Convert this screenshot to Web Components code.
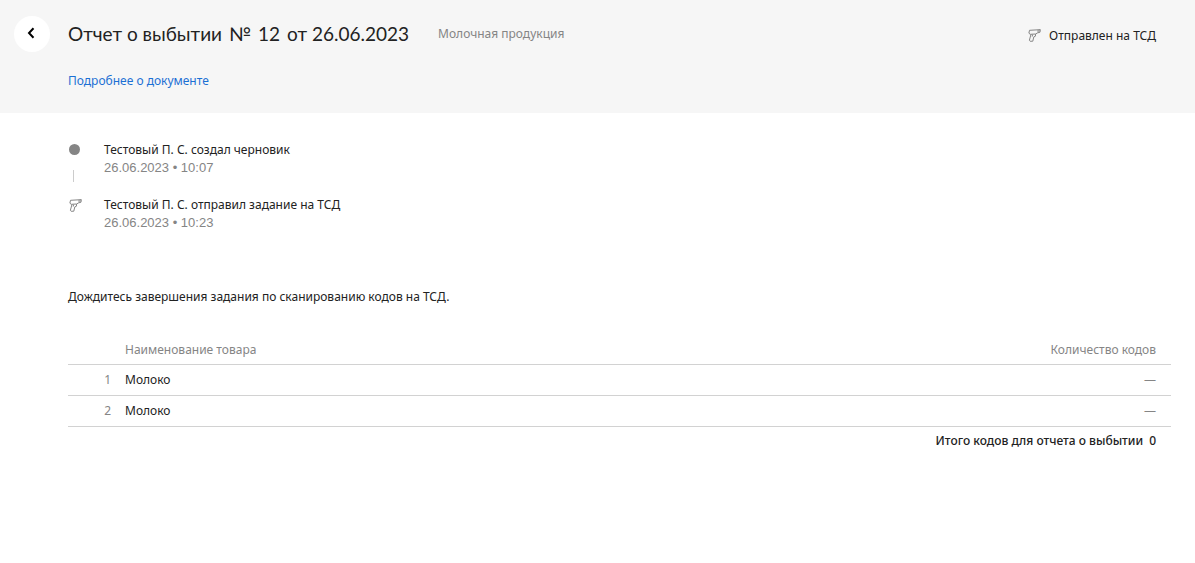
<!DOCTYPE html>
<html lang="ru">
<head>
<meta charset="utf-8">
<title>Отчет о выбытии № 12</title>
<style>
  body { margin: 0; background: #fff; color: #222; font: 12px/18px "Noto Sans", "Open Sans", sans-serif; }
</style>
</head>
<body>
<report-page></report-page>

<template id="scanner-icon">
  <style>
    :host { display: block; width: 13px; height: 13px; color: #858585; }
    svg { display: block; width: 100%; height: 100%; }
  </style>
  <svg viewBox="0 0 13 13" fill="none" stroke="currentColor" stroke-linejoin="round" aria-hidden="true">
    <path d="M1.5 1.3 10 .8 12.3.6 12 3.2 9.5 3.9 7.6 5 2.2 5.3.9 4.2Z"/>
    <path d="M9.4 1 12 .8 11.6 3 9.2 3.6Z" fill="currentColor" stroke="none" opacity=".6"/>
    <path d="M3 5.3 1.4 11.2 2.2 12.3 4.8 12.2 5.8 7.9 7.4 7.2 7.6 5M4.6 5.600 4.200 7.600"/>
  </svg>
</template>

<template id="back-button">
  <style>
    :host { display: block; }
    button { display: grid; place-items: center; width: 36px; height: 36px; padding: 0; border: 0; border-radius: 50%; background: #fff; color: #000; cursor: pointer; }
    svg { display: block; margin-right: 2px; margin-bottom: 2px; }
  </style>
  <button type="button" aria-label="Назад">
    <svg width="8" height="12" viewBox="0 0 8 12" fill="none" stroke="currentColor" stroke-width="2"><path d="M6.5 1.2 2 6l4.5 4.8"/></svg>
  </button>
</template>

<template id="report-header">
  <style>
    :host { display: grid; grid-template-columns: 36px 1fr; column-gap: 18px; padding: 16px 39px 23px 14px; background: #f6f6f6; }
    .line { display: flex; align-items: center; height: 36px; }
    h1 { margin: 0; font: 400 19px/24px Lato, Roboto, sans-serif; }
    .group { margin-left: 29px; color: #858585; }
    .status { display: flex; align-items: center; gap: 8px; margin-left: auto; padding-top: 3px; }
    a { grid-column: 2; justify-self: start; margin-top: 20px; color: #1c70d4; text-decoration: none; }
  </style>
  <back-button></back-button>
  <div class="line">
    <h1><slot name="title"></slot></h1>
    <span class="group"><slot name="group"></slot></span>
    <span class="status"><scanner-icon></scanner-icon><slot name="status"></slot></span>
  </div>
  <a href="#details">Подробнее о документе</a>
</template>

<template id="history-event">
  <style>
    :host { display: grid; grid-template-columns: 14px 1fr; column-gap: 22px; }
    .mark { display: grid; justify-items: start; align-content: start; padding: 3px 0 0 1px; }
    .when { color: #858585; font: 13px/18px "Liberation Sans", Arial, sans-serif; }
  </style>
  <div class="mark"><slot name="mark"></slot></div>
  <div>
    <div><slot></slot></div>
    <div class="when"><slot name="when"></slot></div>
  </div>
</template>

<template id="document-history">
  <style>
    :host { display: grid; row-gap: 14px; }
    .dot { width: 11px; height: 11px; border-radius: 50%; background: #858585; }
    .link { width: 1px; height: 12px; margin: 15px 0 0 4px; background: #ccc; }
  </style>
  <history-event>
    <span slot="mark" class="dot"></span><span slot="mark" class="link"></span>
    Тестовый П. С. создал черновик
    <span slot="when">26.06.2023 • 10:07</span>
  </history-event>
  <history-event>
    <scanner-icon slot="mark"></scanner-icon>
    Тестовый П. С. отправил задание на ТСД
    <span slot="when">26.06.2023 • 10:23</span>
  </history-event>
</template>

<template id="goods-table">
  <style>
    :host { display: block; }
    table { width: 100%; border-collapse: collapse; }
    th, td { height: 18px; padding: 6px 15px 6px 0; text-align: left; font-weight: 400; }
    thead th { padding-bottom: 5px; }
    thead th, tbody tr > * { border-bottom: 1px solid #d2d2d2; }
    thead th, .muted { color: #858585; }
    .num { width: 43px; padding-right: 14px; text-align: right; }
    .count { text-align: right; }
    tfoot td { padding-top: 5px; text-align: right; font-weight: 500; }
    output { margin-left: 6px; }
  </style>
  <table>
    <thead><tr><th class="num"></th><th>Наименование товара</th><th class="count">Количество кодов</th></tr></thead>
    <tbody></tbody>
    <tfoot><tr><td colspan="3">Итого кодов для отчета о выбытии<output>0</output></td></tr></tfoot>
  </table>
</template>

<template id="report-page">
  <style>
    :host { display: block; }
    main { padding: 28px 24px 28px 68px; }
    p { margin: 56px 0 29px; }
    .title { display: flex; gap: 7px; }
  </style>
  <report-header>
    <span slot="title" class="title"><span>Отчет о выбытии</span> <span>№</span> <span>12</span> <span>от 26.06.2023</span></span>
    <span slot="group">Молочная продукция</span>
    <span slot="status">Отправлен на ТСД</span>
  </report-header>
  <main>
    <document-history></document-history>
    <p>Дождитесь завершения задания по сканированию кодов на ТСД.</p>
    <goods-table></goods-table>
  </main>
</template>

<script>
  class TemplateElement extends HTMLElement {
    constructor() {
      super();
      const template = document.getElementById(this.localName);
      this.attachShadow({ mode: "open" }).append(template.content.cloneNode(true));
    }
  }

  class GoodsTable extends TemplateElement {
    connectedCallback() {
      const goods = ["Молоко", "Молоко"];
      const body = this.shadowRoot.querySelector("tbody");
      body.replaceChildren(...goods.map((name, index) => {
        const row = document.createElement("tr");
        [[index + 1, "num muted"], [name, ""], ["—", "count muted"]].forEach(([text, className]) => {
          const cell = document.createElement("td");
          cell.textContent = text;
          cell.className = className;
          row.append(cell);
        });
        return row;
      }));
    }
  }

  for (const name of ["scanner-icon", "back-button", "report-header", "history-event", "document-history", "report-page"]) {
    customElements.define(name, class extends TemplateElement {});
  }
  customElements.define("goods-table", GoodsTable);
</script>
</body>
</html>
